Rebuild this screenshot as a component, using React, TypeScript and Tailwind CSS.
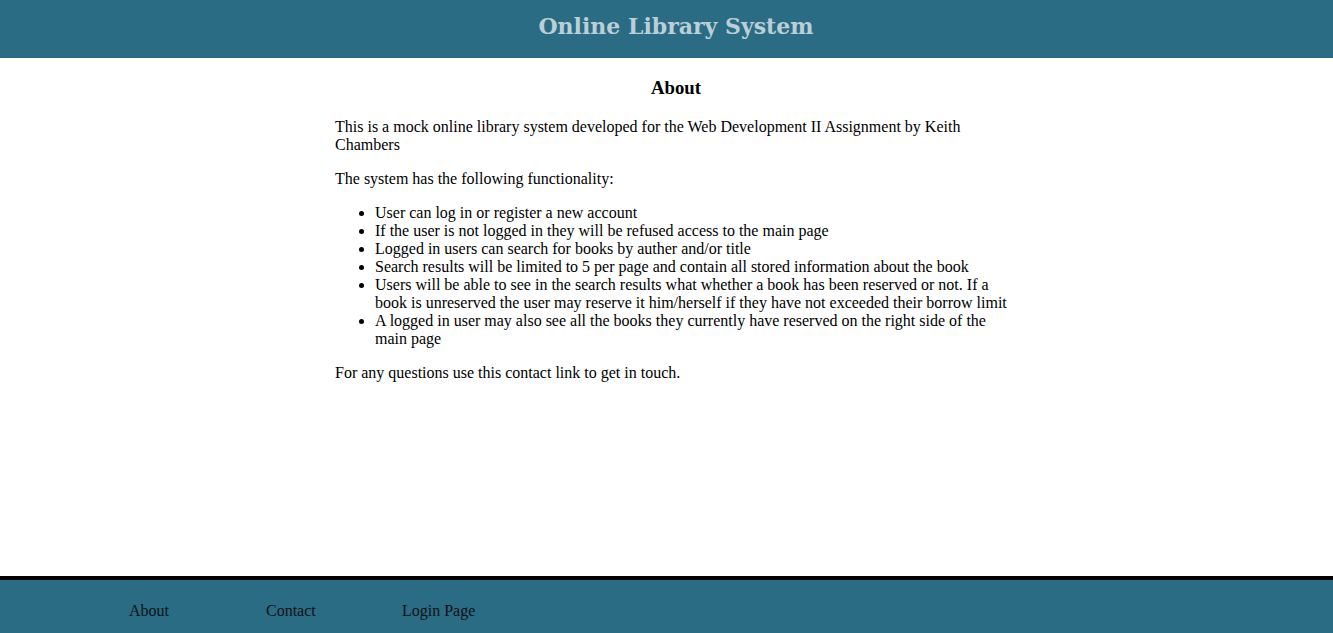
import React from "react";

const serif = { fontFamily: '"Liberation Serif", "Times New Roman", serif' };
const titleFont = { fontFamily: '"DejaVu Serif", Georgia, serif' };

const features = [
  "User can log in or register a new account",
  "If the user is not logged in they will be refused access to the main page",
  "Logged in users can search for books by auther and/or title",
  "Search results will be limited to 5 per page and contain all stored information about the book",
  "Users will be able to see in the search results what whether a book has been reserved or not. If a book is unreserved the user may reserve it him/herself if they have not exceeded their borrow limit",
  "A logged in user may also see all the books they currently have reserved on the right side of the main page",
];

export default function App() {
  return (
    <div className="flex flex-col h-screen bg-white text-black" style={serif}>
      <header className="h-[58px] bg-[#2a6c84] flex items-center justify-center pl-[19px]">
        <h1 className="text-[22px] font-bold text-[#bccfd7] leading-none pb-[6px]" style={titleFont}>
          Online Library System
        </h1>
      </header>
      <main className="flex-1">
        <div className="w-[682px] ml-[335px] text-[16px] leading-[18px]">
          <h3 className="text-[18.72px] font-bold text-center mt-[19px] mb-[19px] leading-[22px]">
            About
          </h3>
          <p className="mb-4">
            This is a mock online library system developed for the Web Development II Assignment by Keith
            Chambers
          </p>
          <p className="mb-4">The system has the following functionality:</p>
          <ul className="list-disc pl-10 mb-4">
            {features.map((f) => (
              <li key={f}>{f}</li>
            ))}
          </ul>
          <p>For any questions use this contact link to get in touch.</p>
        </div>
      </main>
      <footer className="h-[57px] border-t-4 border-black bg-[#2a6c84]">
        <nav className="flex pl-[129px] pt-[22px] text-[16px] leading-[18px] text-[#111]">
          <a className="w-[137px]">About</a>
          <a className="w-[136px]">Contact</a>
          <a className="w-[137px]">Login Page</a>
        </nav>
      </footer>
    </div>
  );
}
